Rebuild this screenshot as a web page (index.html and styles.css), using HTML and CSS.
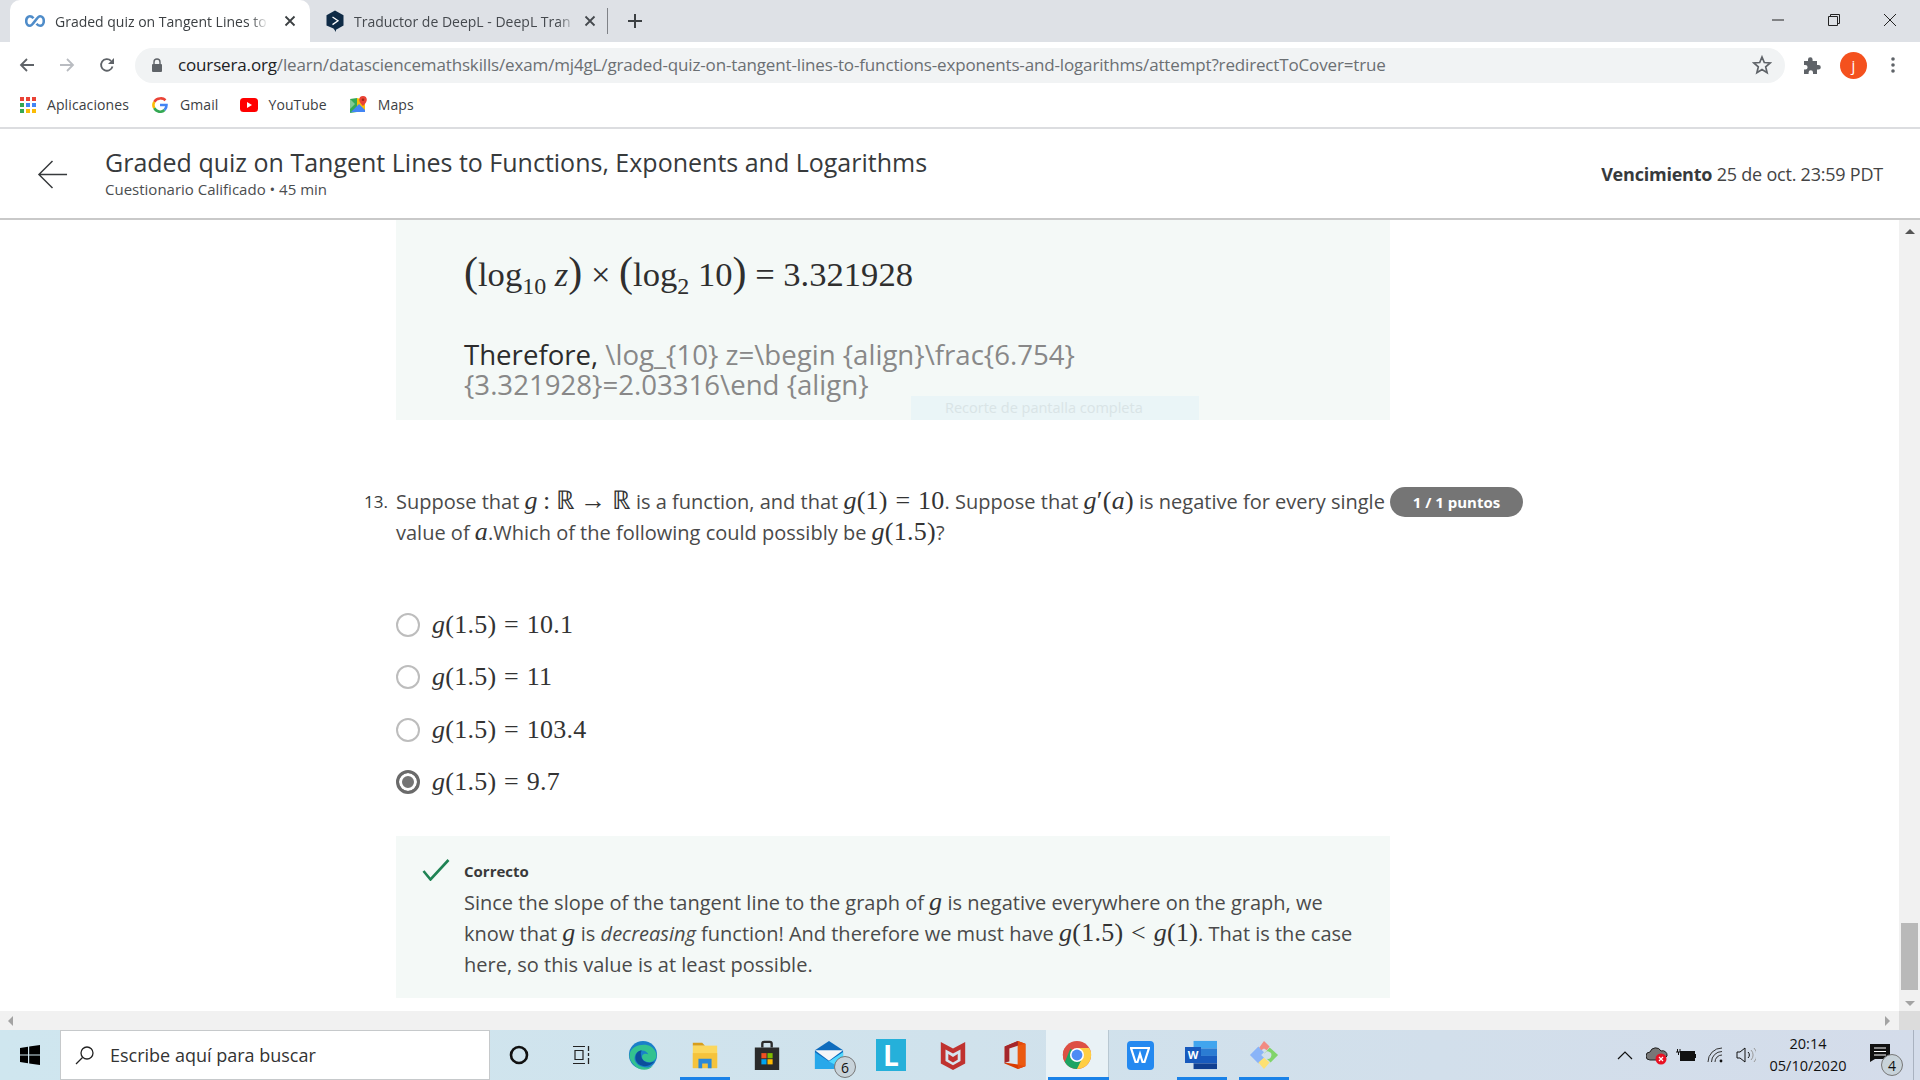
FILE: index.html
```html
<!DOCTYPE html>
<html lang="es">
<head>
<meta charset="utf-8">
<title>Graded quiz</title>
<link rel="stylesheet" href="styles.css">
</head>
<body>
<div class="tabstrip">
  <div class="tab tab-active">
    <svg class="tab-icon" viewBox="0 0 20 20"><path d="M8.5 7.2C7.4 5.8 6.2 5.2 4.9 5.2 2.800 5.200 1.200 7.300 1.200 10s1.600 4.800 3.700 4.800c3.300 0 6.900-9.600 10.200-9.600 2.100 0 3.700 2.100 3.700 4.800s-1.600 4.800-3.700 4.800c-1.300 0-2.500-.6-3.600-2" fill="none" stroke="#4f8cc9" stroke-width="2.600"/></svg>
    <span class="tab-title">Graded quiz on Tangent Lines to</span>
    <svg class="tab-close" viewBox="0 0 12 12"><path d="M1.500 1.500l9 9M10.500 1.500l-9 9" stroke="#3c4043" stroke-width="1.800"/></svg>
  </div>
  <div class="tab tab-idle">
    <svg class="tab-icon" viewBox="0 0 20 22"><path d="M10 .5l8.500 4.800v10.200L11 19.800 11 22 8.500 18.500 1.500 15.500V5.300z" fill="#0f2b46"/><path d="M7.500 7l5.500 3.800-5.500 3.800" fill="none" stroke="#fff" stroke-width="1.300"/></svg>
    <span class="tab-title">Traductor de DeepL - DeepL Tran</span>
    <svg class="tab-close" viewBox="0 0 12 12"><path d="M1.500 1.500l9 9M10.500 1.500l-9 9" stroke="#45494e" stroke-width="1.800"/></svg>
  </div>
  <span class="tab-sep"></span>
  <svg class="new-tab" viewBox="0 0 14 14"><path d="M7 0v14M0 7h14" stroke="#3c4043" stroke-width="2"/></svg>
  <div class="win-controls">
    <svg class="win-btn" viewBox="0 0 14 14"><path d="M1 7h12" stroke="#222" stroke-width="1"/></svg>
    <svg class="win-btn" viewBox="0 0 14 14"><path d="M1.500 3.500h9v9h-9zM3.500 3.500v-2h9v9h-2" fill="none" stroke="#222" stroke-width="1"/></svg>
    <svg class="win-btn" viewBox="0 0 14 14"><path d="M1 1l12 12M13 1L1 13" stroke="#222" stroke-width="1"/></svg>
  </div>
</div>

<div class="toolbar">
  <svg class="nav-icon" viewBox="0 0 16 16"><path d="M15 8H2M8 2L2 8l6 6" fill="none" stroke="#5f6368" stroke-width="1.800"/></svg>
  <svg class="nav-icon" viewBox="0 0 16 16"><path d="M1 8h13M8 2l6 6-6 6" fill="none" stroke="#b9bcc1" stroke-width="1.800"/></svg>
  <svg class="nav-icon" viewBox="0 0 16 16"><path d="M13.500 9.500A5.800 5.800 0 1 1 12 3.800" fill="none" stroke="#5f6368" stroke-width="1.800"/><path d="M15 1v6H9z" fill="#5f6368"/></svg>
  <div class="omnibox">
    <svg class="lock" viewBox="0 0 12 14"><path d="M3 6V4a3 3 0 0 1 6 0v2" fill="none" stroke="#5f6368" stroke-width="1.400"/><rect x="1" y="6" width="10" height="8" rx="1" fill="#5f6368"/></svg>
    <span class="url"><span class="url-host">coursera.org</span>/learn/datasciencemathskills/exam/mj4gL/graded-quiz-on-tangent-lines-to-functions-exponents-and-logarithms/attempt?redirectToCover=true</span>
    <svg class="star" viewBox="0 0 20 20"><path d="M10 2l2.300 5.500 5.900.5-4.500 3.900 1.400 5.800-5.100-3.100-5.100 3.100 1.400-5.800L1.800 8l5.900-.5z" fill="none" stroke="#5f6368" stroke-width="1.700"/></svg>
  </div>
  <svg class="puzzle" viewBox="0 0 20 20"><path d="M2 6h4V4.500a2.300 2.300 0 0 1 4.600 0V6h4.400v4h1.500a2.300 2.300 0 0 1 0 4.600H15V19h-4v-1.500a2.200 2.200 0 0 0-4.400 0V19H2v-4.500h1.300a2.300 2.300 0 0 0 0-4.600H2z" fill="#5f6368"/></svg>
  <span class="avatar">j</span>
  <svg class="dots" viewBox="0 0 4 18"><circle cx="2" cy="3" r="1.800" fill="#5f6368"/><circle cx="2" cy="9" r="1.800" fill="#5f6368"/><circle cx="2" cy="15" r="1.800" fill="#5f6368"/></svg>
</div>

<div class="bookmarks">
  <a class="bm bm-apps">
    <svg class="bm-icon" viewBox="0 0 16 16">
      <rect x="0" y="0" width="4" height="4" fill="#ea4335"/><rect x="6" y="0" width="4" height="4" fill="#ea4335"/><rect x="12" y="0" width="4" height="4" fill="#ea4335"/>
      <rect x="0" y="6" width="4" height="4" fill="#34a853"/><rect x="6" y="6" width="4" height="4" fill="#4285f4"/><rect x="12" y="6" width="4" height="4" fill="#4285f4"/>
      <rect x="0" y="12" width="4" height="4" fill="#34a853"/><rect x="6" y="12" width="4" height="4" fill="#fbbc05"/><rect x="12" y="12" width="4" height="4" fill="#fbbc05"/>
    </svg>
    <span>Aplicaciones</span>
  </a>
  <a class="bm bm-gmail">
    <svg class="bm-icon" viewBox="0 0 16 16">
      <path d="M13.500 3.200A6.500 6.500 0 0 0 8 1.500" fill="none" stroke="#ea4335" stroke-width="2.600"/>
      <path d="M8 1.500a6.500 6.500 0 0 0-5.700 3.300" fill="none" stroke="#ea4335" stroke-width="2.600"/>
      <path d="M2.300 4.800a6.500 6.500 0 0 0 0 6.400" fill="none" stroke="#fbbc05" stroke-width="2.600"/>
      <path d="M2.300 11.200A6.500 6.500 0 0 0 12.500 13" fill="none" stroke="#34a853" stroke-width="2.600"/>
      <path d="M12.500 13a6.500 6.500 0 0 0 2-5H8" fill="none" stroke="#4285f4" stroke-width="2.600"/>
    </svg>
    <span>Gmail</span>
  </a>
  <a class="bm bm-yt">
    <svg class="bm-icon bm-icon-wide" viewBox="0 0 18 14"><rect width="18" height="14" rx="3.500" fill="#f00"/><path d="M7 4l5 3-5 3z" fill="#fff"/></svg>
    <span>YouTube</span>
  </a>
  <a class="bm bm-maps">
    <svg class="bm-icon bm-icon-map" viewBox="0 0 18 18">
      <path d="M1 3l7-1v14l-7 1z" fill="#34a853"/><path d="M8 2l8 2v12l-8-1z" fill="#fbbc05"/><path d="M1 17L10 8l6 6v2H3z" fill="#4285f4"/><path d="M1 3l5 5-5 5z" fill="#81c995"/>
      <path d="M14 0a3.800 3.800 0 0 0-3.800 3.800c0 2.800 3.800 6.200 3.800 6.200s3.800-3.400 3.800-6.200A3.800 3.800 0 0 0 14 0z" fill="#ea4335"/><circle cx="14" cy="3.800" r="1.300" fill="#a52714"/>
    </svg>
    <span>Maps</span>
  </a>
</div>

<header class="page-head">
  <svg class="back" viewBox="0 0 32 32"><path d="M31 16H2M16 2L2 16l14 14" fill="none" stroke="#373a3c" stroke-width="1.500"/></svg>
  <div class="head-text">
    <h1 class="head-title">Graded quiz on Tangent Lines to Functions, Exponents and Logarithms</h1>
    <p class="head-sub">Cuestionario Calificado • 45 min</p>
  </div>
  <p class="due"><b>Vencimiento</b> 25 de oct. 23:59 PDT</p>
</header>

<div class="viewport">
  <main class="scrollarea">
    <section class="prev-answer">
      <div class="big-math"><span class="paren">(</span>log<sub>10</sub> <i>z</i><span class="paren">)</span> × <span class="paren">(</span>log<sub>2</sub> 10<span class="paren">)</span> = 3.321928</div>
      <p class="therefore"><span class="dark">Therefore,</span> \log_{10} z=\begin {align}\frac{6.754}<br>{3.321928}=2.03316\end {align}</p>
      <div class="snip-tip"><span class="snip-label">Recorte de pantalla completa</span></div>
    </section>

    <section class="question">
      <span class="q-num">13.</span>
      <p class="q-text">Suppose that <span class="m m-map"><i>g</i> : ℝ → ℝ</span> is a function, and that <span class="m"><i>g</i>(1) = 10</span>. Suppose that <span class="m"><i>g</i>′(<i>a</i>)</span> is negative for every single value of <span class="m"><i>a</i></span>.Which of the following could possibly be <span class="m"><i>g</i>(1.5)</span>?</p>
      <span class="pill">1 / 1 puntos</span>
    </section>

    <ul class="options">
      <li class="option"><span class="radio"></span><span class="opt-math"><i>g</i>(1.5) = 10.1</span></li>
      <li class="option"><span class="radio"></span><span class="opt-math"><i>g</i>(1.5) = 11</span></li>
      <li class="option"><span class="radio"></span><span class="opt-math"><i>g</i>(1.5) = 103.4</span></li>
      <li class="option"><span class="radio radio-on"></span><span class="opt-math"><i>g</i>(1.5) = 9.7</span></li>
    </ul>

    <section class="feedback">
      <svg class="check" viewBox="0 0 28 22"><path d="M1.500 12l7 8.500L26.500 1" fill="none" stroke="#1f8354" stroke-width="2.600"/></svg>
      <div>
        <p class="fb-title">Correcto</p>
        <p class="fb-text">Since the slope of the tangent line to the graph of <span class="m"><i>g</i></span> is negative everywhere on the graph, we know that <span class="m"><i>g</i></span> is <em>decreasing</em> function! And therefore we must have <span class="m"><i>g</i>(1.5) &lt; <i>g</i>(1)</span>. That is the case here, so this value is at least possible.</p>
      </div>
    </section>
  </main>
  <div class="vscroll">
    <span class="arrow arrow-up"></span>
    <span class="thumb"></span>
    <span class="arrow arrow-down"></span>
  </div>
</div>

<div class="hscroll">
  <span class="arrow arrow-left"></span>
  <span class="arrow arrow-right"></span>
  <span class="corner"></span>
</div>

<footer class="taskbar">
  <div class="start">
    <svg class="start-logo" viewBox="0 0 20 20"><path d="M0 3l8-1.200V9.500H0zM9.200 1.600L20 0v9.500H9.200zM0 10.600h8v7.600L0 17zM9.200 10.600H20V20L9.200 18.400z" fill="#000"/></svg>
  </div>
  <div class="search">
    <svg class="search-icon" viewBox="0 0 20 20"><circle cx="12" cy="8" r="6" fill="none" stroke="#222" stroke-width="1.300"/><path d="M7.500 12.500L1 19" stroke="#222" stroke-width="1.300"/></svg>
    <span>Escribe aquí para buscar</span>
  </div>
  <div class="task-icons">
    <span class="ti"><svg class="ic20" viewBox="0 0 20 20"><circle cx="10" cy="10" r="8" fill="none" stroke="#111" stroke-width="2.600"/></svg></span>
    <span class="ti"><svg class="ic20" viewBox="0 0 20 20"><path d="M2 1.500h12M2 18.500h12M4 5.500h8v9H4z" fill="none" stroke="#222" stroke-width="1.200"/><path d="M17.500 1v5M17.500 8v3M17.500 13v6" stroke="#222" stroke-width="1.300"/></svg></span>
    <span class="ti"><svg class="ic32" viewBox="0 0 32 32"><circle cx="16" cy="16" r="15" fill="#1a7fc9"/><path d="M2 14C4 4 26 0 30 14c2 8-6 11-11 9-5-2-5-7-2-8 4-1 5 1 5 1-2-7-14-7-15 3C6 27 20 33 27 27c-5 7-16 6-21-1C2 22 1 18 2 14z" fill="#33c28f"/><path d="M14 16c0 7 8 10 14 7-3 5-14 8-19 0-3-6 1-12 6-12 0 0-2 2-1 5z" fill="#0c4f9c"/></svg></span>
    <span class="ti ti-open"><svg class="ic32" viewBox="0 0 32 32"><path d="M3 3h10l3 3H3z" fill="#d89d1a"/><path d="M3 6h26v24H3z" fill="#fbd75d"/><path d="M3 14h26v16H3z" fill="#f5c33c"/><path d="M9 30V20h14v10h-4v-5h-6v5z" fill="#2b88d8"/></svg></span>
    <span class="ti"><svg class="ic32" viewBox="0 0 32 32"><path d="M11 8V4a2 2 0 0 1 2-2h6a2 2 0 0 1 2 2v4" fill="none" stroke="#2b2b2b" stroke-width="2.500"/><path d="M3 8h26v24H3z" fill="#2b2b2b"/><rect x="10" y="14" width="5.500" height="5.500" fill="#f25022"/><rect x="16.500" y="14" width="5.500" height="5.500" fill="#7fba00"/><rect x="10" y="20.500" width="5.500" height="5.500" fill="#00a4ef"/><rect x="16.500" y="20.500" width="5.500" height="5.500" fill="#ffb900"/></svg></span>
    <span class="ti ti-badge"><svg class="ic32" viewBox="0 0 32 32"><path d="M1 11L16 1l15 10v20H1z" fill="#0f6cbd"/><path d="M1 11h30L16 22z" fill="#f4f6f8"/><path d="M1 31V13l15 10 15-10v18z" fill="#28a8ea"/><path d="M16 23l15-10v18z" fill="#50d9ff"/></svg><span class="count count-mail">6</span></span>
    <span class="ti"><span class="tile-l">L</span></span>
    <span class="ti"><svg class="ic32" viewBox="0 0 32 32"><path d="M3 2l13 7 13-7v23l-13 7-13-7z" fill="#c0322f"/><path d="M8 10l8 4.500 8-4.500v12.500l-8 4.500-8-4.500z" fill="#d6e5ee"/><path d="M11 15l5 3 5-3v6l-5 3-5-3z" fill="#c0322f"/></svg></span>
    <span class="ti"><svg class="ic32" viewBox="0 0 32 32"><path d="M5 7l14-6 8 3v24l-8 3-14-6z" fill="#d83b01"/><path d="M19 1l8 3v24l-8 3z" fill="#e64a0c"/><path d="M5 7l14-6v5l-9 3v14l-5 2z" fill="#a4262c"/><path d="M10 9l9-3v20l-14-2 5-1z" fill="#d9e6ef"/><path d="M19 6v20l8 2V4z" fill="#eb5a10"/></svg></span>
    <span class="ti ti-open ti-active"><svg class="ic32" viewBox="0 0 32 32"><circle cx="16" cy="16" r="15" fill="#dd5044"/><path d="M16 16L3 23.500A15 15 0 0 1 3 8.500z" fill="#dd5044"/><path d="M16 31A15 15 0 0 1 3 23.500L9 9l7 7 7.500 2z" fill="#1da462"/><path d="M16 31a15 15 0 0 0 13-22.500H16l7.500 7z" fill="#ffce43"/><circle cx="16" cy="16" r="7.500" fill="#fff"/><circle cx="16" cy="16" r="5.800" fill="#4c8bf5"/></svg></span>
    <span class="ti-gap"></span>
    <span class="ti ti-wps"><span class="tile-wps"><svg class="ic20" viewBox="0 0 20 20"><path d="M1 3h18l-4.500 14h-2L10 9l-2.500 8h-2z" fill="none" stroke="#fff" stroke-width="2.200"/></svg></span></span>
    <span class="ti ti-open"><svg class="ic32" viewBox="0 0 32 32"><rect x="7" y="1" width="25" height="8" fill="#41a5ee"/><rect x="7" y="9" width="25" height="8" fill="#2b7cd3"/><rect x="7" y="17" width="25" height="8" fill="#185abd"/><rect x="7" y="25" width="25" height="6" fill="#103f91"/></svg><span class="tile-w">W</span></span>
    <span class="ti ti-open"><svg class="ic32" viewBox="0 0 32 32"><path d="M1 16l9-9 6 6-3 3 3 3-6 6z" fill="#8ab4f8"/><path d="M16 1l6 6-3 4-3-2-3 2-2-3z" fill="#f28b82"/><path d="M22 8l9 8-8 8-4-4a4 4 0 1 0-3-5z" fill="#81d46a"/><path d="M10 24l6-5 6 5-6 7z" fill="#fde073"/></svg></span>
  </div>
  <div class="tray">
    <svg class="tray-chev" viewBox="0 0 16 9"><path d="M1 8l7-7 7 7" fill="none" stroke="#111" stroke-width="1.200"/></svg>
    <svg class="tray-cloud" viewBox="0 0 22 20"><path d="M4 15a4 4 0 0 1 0-8 6 6 0 0 1 11-1 4.500 4.500 0 0 1 6 5l-4 4z" fill="#777" stroke="#222" stroke-width="1"/><circle cx="15" cy="14" r="5.500" fill="#e81123"/><path d="M13 12l4 4M17 12l-4 4" stroke="#fff" stroke-width="1.200"/></svg>
    <svg class="tray-batt" viewBox="0 0 20 14"><path d="M0 4h4V1M1.500 1v3M2.500 4v3" fill="none" stroke="#111" stroke-width="1"/><rect x="4.500" y="3.500" width="14" height="9" fill="#111" stroke="#111"/><rect x="19" y="6" width="1" height="4" fill="#111"/></svg>
    <svg class="tray-wifi" viewBox="0 0 18 16"><path d="M1 15A14 14 0 0 1 15 1M4.500 15A10.500 10.500 0 0 1 15 4.500M8 15a7 7 0 0 1 7-7" fill="none" stroke="#333" stroke-width="1"/><circle cx="14" cy="14" r="1.400" fill="#111"/></svg>
    <svg class="tray-vol" viewBox="0 0 20 16"><path d="M1 5h3l5-4v14l-5-4H1z" fill="none" stroke="#111" stroke-width="1"/><path d="M12 5a4 4 0 0 1 0 6" fill="none" stroke="#111" stroke-width="1"/><path d="M15 3a7 7 0 0 1 0 10M18 1a10 10 0 0 1 0 14" fill="none" stroke="#999" stroke-width="1"/></svg>
    <div class="clock"><span>20:14</span><span>05/10/2020</span></div>
    <span class="notif"><svg class="notif-ic" viewBox="0 0 20 18"><path d="M0 0h20v15H5l-5 3z" fill="#111"/><path d="M4 4h12M4 7.500h12M4 11h12" stroke="#fff" stroke-width="1"/></svg><span class="count count-notif">4</span></span>
    <span class="show-desk"></span>
  </div>
</footer>
</body>
</html>
```
FILE: styles.css
```css
* { box-sizing: border-box; }
html, body { margin: 0; padding: 0; }
body {
  width: 1920px;
  height: 1080px;
  overflow: hidden;
  background: #fff;
  color: #373a3c;
  font-family: "Open Sans", "Noto Sans", sans-serif;
  display: flex;
  flex-direction: column;
}
p, h1, ul { margin: 0; padding: 0; }

/* tab strip */
.tabstrip {
  height: 42px;
  flex: none;
  background: #dee1e6;
  display: flex;
  align-items: stretch;
  padding-left: 10px;
}
.tab {
  width: 300px;
  display: flex;
  align-items: center;
  padding: 0 14px 0 15px;
  font-size: 14px;
  color: #3c4043;
}
.tab-active { background: #fff; border-radius: 10px 10px 0 0; }
.tab-idle { width: 295px; padding-right: 9px; color: #45494e; }
.tab-icon { width: 20px; height: 22px; flex: none; margin-right: 9px; }
.tab-active .tab-icon { width: 20px; margin-right: 10px; }
.tab-title {
  flex: 1;
  overflow: hidden;
  white-space: nowrap;
  -webkit-mask-image: linear-gradient(90deg, #000 92%, transparent 100%);
  mask-image: linear-gradient(90deg, #000 92%, transparent 100%);
}
.tab-close { width: 12px; height: 12px; flex: none; margin-left: 16px; }
.tab-idle .tab-close { margin-left: 8px; }
.tab-sep { width: 1px; height: 26px; align-self: center; background: #7f8287; margin-left: 2px; }
.new-tab { width: 14px; height: 14px; align-self: center; margin-left: 20px; }
.win-controls { margin-left: auto; display: flex; align-items: center; gap: 42px; padding-right: 23px; padding-bottom: 2px; }
.win-btn { width: 14px; height: 14px; }

/* toolbar */
.toolbar {
  height: 46px;
  flex: none;
  display: flex;
  align-items: center;
  padding-left: 19px;
}
.nav-icon { width: 16px; height: 16px; flex: none; }
.nav-icon + .nav-icon { margin-left: 24px; }
.omnibox {
  width: 1650px;
  height: 35px;
  margin-left: 20px;
  border-radius: 18px;
  background: #f1f3f4;
  display: flex;
  align-items: center;
  padding-left: 16px;
  padding-right: 13px;
}
.lock { width: 12px; height: 14px; flex: none; margin-right: 15px; }
.url { font-size: 17px; letter-spacing: -.15px; color: #6b6f73; white-space: nowrap; flex: 1; font-family: "Open Sans", sans-serif; margin-top: -2px; }
.url-host { color: #202124; }
.star { width: 20px; height: 20px; flex: none; }
.puzzle { width: 20px; height: 20px; margin-left: 17px; flex: none; }
.avatar {
  width: 27px; height: 27px; border-radius: 50%;
  background: #f4511e; color: #fff;
  font-size: 15px; margin-left: 18px; flex: none;
  display: flex; align-items: center; justify-content: center;
}
.dots { width: 4px; height: 18px; margin-left: 24px; flex: none; }

/* bookmarks */
.bookmarks {
  height: 41px;
  flex: none;
  border-bottom: 2px solid #dcdde0;
  display: flex;
  align-items: center;
  padding: 0 0 6px 20px;
  font-size: 14px;
  color: #3c4043;
  letter-spacing: .1px;
}
.bm { display: flex; align-items: center; }
.bm-icon { width: 16px; height: 16px; flex: none; margin-right: 12px; }
.bm-icon-wide { width: 18px; height: 14px; margin-right: 10px; }
.bm-icon-map { width: 18px; height: 18px; margin-right: 11px; }
.bm-apps .bm-icon { margin-right: 11px; }
.bm-gmail { margin-left: 23px; }
.bm-yt { margin-left: 22px; }
.bm-maps { margin-left: 22px; }

/* page head */
.page-head {
  height: 91px;
  flex: none;
  border-bottom: 2px solid #c9c9c9;
  display: flex;
  align-items: center;
  padding: 0 37px;
}
.back { width: 31px; height: 31px; flex: none; margin-right: 37px; margin-top: 2px; }
.head-title { font-size: 25px; font-weight: 400; line-height: 32px; margin-top: -1px; color: #373a3c; white-space: nowrap; }
.head-sub { font-size: 15px; line-height: 22px; color: #4a4d4f; }
.due { margin-left: auto; font-size: 18px; letter-spacing: -.22px; color: #444; }
.due b { font-weight: 700; color: #373a3c; }

/* viewport */
.viewport { flex: 1; display: flex; min-height: 0; }
.scrollarea { flex: 1; padding-left: 396px; overflow: hidden; }
.vscroll {
  width: 21px;
  flex: none;
  background: #f1f1f1;
  position: relative;
  display: flex;
  flex-direction: column;
  align-items: center;
  padding-top: 9px;
}
.thumb { position: absolute; left: 2px; top: 703px; width: 17px; height: 67px; background: #b9b9b9; }
.arrow { display: block; width: 0; height: 0; border-style: solid; border-color: transparent; }
.arrow-up { border-width: 0 5px 5px; border-bottom-color: #555; }
.arrow-down { position: absolute; top: 781px; left: 6px; border-width: 5px 5px 0; border-top-color: #a3a3a3; }

/* previous answer panel */
.prev-answer {
  width: 994px;
  height: 200px;
  background: #f4f9f7;
  padding: 25px 68px 0;
  position: relative;
}
.big-math { font-family: "Liberation Serif", serif; font-size: 34.600px; line-height: 54px; color: #2f2f2f; white-space: nowrap; }
.big-math sub { font-size: 24px; line-height: 0; }
.paren { font-size: 42px; font-weight: 400; }
.therefore { font-size: 27.600px; line-height: 30px; color: #888; margin-top: 38px; white-space: nowrap; }
.dark { color: #2c2c2c; }
.snip-tip {
  position: absolute;
  left: 515px; top: 176px;
  width: 288px; height: 24px;
  background: #eaf5f7;
  padding-left: 34px;
  font-size: 14.500px;
  line-height: 24px;
  color: #d9e4e6;
}

/* question */
.question {
  width: 1130px;
  margin-left: -32px;
  margin-top: 66px;
  display: grid;
  grid-template-columns: 32px 994px 133px;
  font-size: 20px;
  line-height: 31px;
}
.q-num { font-size: 17px; }
.q-text { width: 994px; padding-right: 2px; color: #4a4a4a; }
.m { font-family: "Liberation Serif", serif; font-size: 26px; line-height: 26px; letter-spacing: .25px; word-spacing: 1px; color: #333; white-space: nowrap; }
.m-map { letter-spacing: 0; word-spacing: -1px; }
.pill {
  width: 133px;
  height: 30px;
  margin-top: 1px;
  border-radius: 15px;
  background: #757575;
  color: #fff;
  font-weight: 700;
  font-size: 15px;
  line-height: 30px;
  text-align: center;
}

/* options */
.options { list-style: none; margin-top: 51px; }
.option { height: 52.300px; display: flex; align-items: center; }
.radio { width: 24px; height: 24px; border-radius: 50%; border: 2px solid #bdbdbd; flex: none; margin-right: 12px; background: #fff; }
.radio-on { border: 3px solid #6a6a6a; box-shadow: inset 0 0 0 3px #fff; background: #757575; }
.opt-math { font-family: "Liberation Serif", serif; font-size: 26px; letter-spacing: .25px; word-spacing: 1px; color: #333; white-space: nowrap; }

/* feedback */
.feedback {
  width: 994px;
  height: 162px;
  margin-top: 28px;
  background: #f4f9f7;
  padding: 22px 30px 0 26px;
  display: flex;
}
.check { width: 28px; height: 22px; flex: none; margin-right: 14px; margin-top: 1px; }
.fb-title { font-size: 15px; font-weight: 700; line-height: 24px; color: #3a3a3a; margin-top: 1px; }
.fb-text { font-size: 20px; line-height: 31px; color: #4a4a4a; margin-top: 4px; }

/* h-scroll */
.hscroll { height: 19px; flex: none; background: #f1f1f1; display: flex; align-items: center; padding-left: 8px; position: relative; }
.arrow-left { border-width: 5px 5px 5px 0; border-right-color: #a3a3a3; }
.arrow-right { border-width: 5px 0 5px 5px; border-left-color: #a3a3a3; margin-left: auto; margin-right: 9px; }
.corner { width: 21px; height: 19px; background: #dcdcdc; flex: none; }

/* taskbar */
.taskbar {
  height: 50px;
  flex: none;
  display: flex;
  align-items: stretch;
  background: linear-gradient(90deg, #cfe6ef 0%, #d0e2ec 50%, #d4dcea 100%);
}
.start { width: 60px; display: flex; align-items: center; justify-content: center; flex: none; }
.start-logo { width: 20px; height: 20px; }
.search {
  width: 430px;
  flex: none;
  background: #fff;
  border: 1px solid #c6c9cb;
  display: flex;
  align-items: center;
  padding-left: 14px;
  font-size: 18px;
  color: #333;
}
.search-icon { width: 20px; height: 20px; margin-right: 15px; }
.task-icons { display: flex; flex: none; margin-left: -2px; }
.ti { width: 62px; display: flex; align-items: center; justify-content: center; position: relative; }
.ti-open::after { content: ""; position: absolute; left: 6px; right: 6px; bottom: 0; height: 3px; background: #1a82e8; }
.ti-active { background: #e9f2f6; }
.ti-active::after { left: 2px; right: -1px; }
.ti-gap { width: 0; border-left: 1px solid #b8c8d2; }
.ic20 { width: 20px; height: 20px; }
.ic32 { width: 30px; height: 30px; }
.count {
  position: absolute;
  width: 22px; height: 22px; border-radius: 50%;
  background: #c8d3da;
  border: 1px solid #777;
  color: #111;
  font-size: 14px;
  display: flex; align-items: center; justify-content: center;
}
.count-mail { right: 4px; bottom: 2px; }
.tile-l {
  width: 30px; height: 32px;
  background: #25b0da;
  color: #fff;
  font-weight: 700;
  font-size: 28px;
  line-height: 32px;
  text-align: center;
}
.tile-wps {
  width: 27px; height: 29px; border-radius: 4px;
  background: #2489f0;
  display: flex; align-items: center; justify-content: center;
}
.tile-w {
  position: absolute;
  left: 14px; top: 17px;
  width: 16px; height: 16px;
  background: #185abd;
  color: #fff;
  font-size: 11px;
  font-weight: 700;
  line-height: 16px;
  text-align: center;
}
.tray { flex: 1; display: flex; align-items: center; justify-content: flex-end; padding-right: 6px; }
.tray-chev { width: 16px; height: 9px; margin-right: 13px; }
.tray-cloud { width: 22px; height: 20px; margin-right: 8px; }
.tray-batt { width: 20px; height: 14px; margin-right: 11px; }
.tray-wifi { width: 18px; height: 16px; margin-right: 11px; }
.tray-vol { width: 20px; height: 16px; margin-right: 8px; }
.clock { width: 88px; display: flex; flex-direction: column; align-items: center; font-size: 14.500px; line-height: 22px; color: #111; margin-right: 5px; }
.notif { width: 46px; height: 50px; position: relative; display: flex; align-items: center; justify-content: center; margin-right: 10px; }
.notif-ic { width: 20px; height: 18px; margin-top: -4px; }
.count-notif { right: 0; bottom: 4px; }
.show-desk { width: 1px; height: 50px; background: #a9b2c0; }
```
